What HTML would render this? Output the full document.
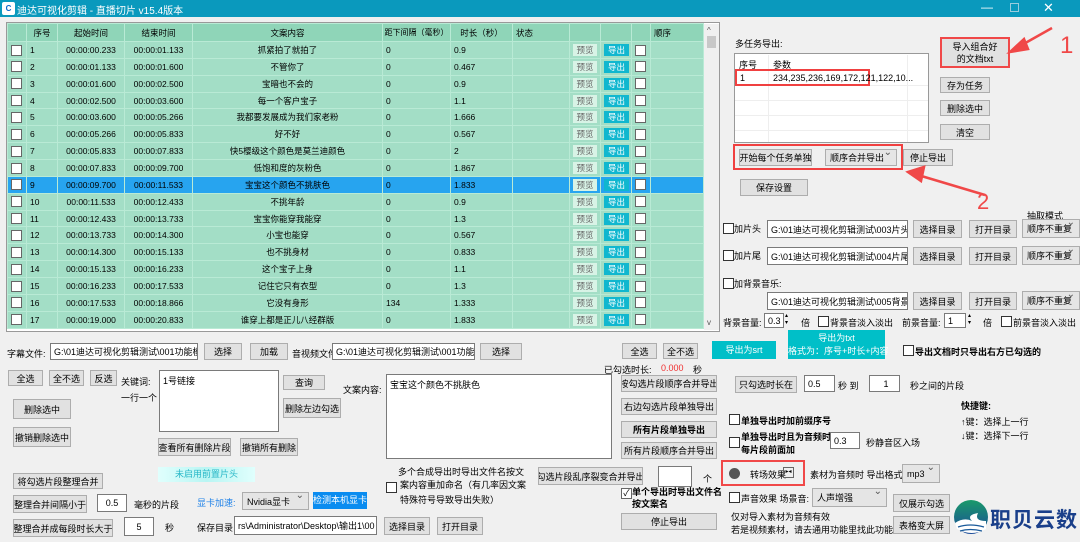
<!DOCTYPE html>
<html><head><meta charset="utf-8"><style>
*{box-sizing:border-box;margin:0;padding:0}
body{width:1080px;height:542px;position:relative;overflow:hidden;background:#f0f0f0;font-family:"Liberation Sans","Noto Sans CJK SC",sans-serif;font-size:9px;color:#000}
.a{position:absolute;white-space:nowrap}
.b{position:absolute;background:#e1e1e1;border:1px solid #adadad;text-align:center;font-size:9px;display:flex;align-items:center;justify-content:center;white-space:nowrap;overflow:hidden}
.i{position:absolute;background:#fff;border:1px solid #7a7a7a;font-size:9px;padding-left:3px;display:flex;align-items:center;white-space:nowrap;overflow:hidden}
.cb{position:absolute;width:11px;height:11px;background:#fff;border:1px solid #333}
.cmb{position:absolute;background:#e5e5e5;border:1px solid #adadad;font-size:9px;padding-left:4px;display:flex;align-items:center;white-space:nowrap}
.cmb:after{content:"⌄";position:absolute;right:4px;top:-3px;font-size:10px;color:#555}
table{position:absolute;left:7px;top:23px;width:696px;border-collapse:collapse;table-layout:fixed;background:#a3dec6}
td{height:16.87px;border:1px solid #b9ead5;font-size:8.5px;padding:0 3px;white-space:nowrap;overflow:hidden}
tr.h td{background:#8fd5b8;height:18px;text-align:center}
tr.s td{background:#27a4ef;color:#000}
td.c{text-align:center}
.pv{display:inline-block;background:#d8f3e6;color:#666;padding:0 3px;font-size:8.5px;line-height:12px}
.dc{display:inline-block;background:#10b7cf;color:#fff;padding:0 4px;font-size:8.5px;line-height:12px}
.tb{display:inline-block;width:11px;height:11px;background:#fff;border:1px solid #666;vertical-align:middle}
</style></head><body>
<div class="a" style="left:0;top:0;width:1080px;height:17px;background:#0a99bd"></div>
<div class="a" style="left:2px;top:2px;width:13px;height:13px;background:#fff;border-radius:2px;font-size:8px;color:#0a66cc;font-weight:bold;text-align:center;line-height:13px">C</div>
<div class="a" style="left:17px;top:2px;color:#fff;font-size:10px">迪达可视化剪辑 -  直播切片   v15.4版本</div>
<div class="a" style="left:981px;top:0;color:#fff;font-size:12px">—</div>
<div class="a" style="left:1010px;top:3px;width:9px;height:9px;border:1px solid #9cd"></div>
<div class="a" style="left:1043px;top:0px;color:#fff;font-size:13px">✕</div>
<div class="a" style="left:6px;top:22px;width:714px;height:310px;background:#fff;border:1px solid #999"></div>
<div class="a" style="left:704px;top:24px;width:15px;height:306px;background:#f0f0f0"></div>
<div class="a" style="left:707px;top:36px;width:9px;height:12px;background:#c8c8c8"></div>
<div class="a" style="left:707px;top:26px;font-size:8px;color:#555">^</div>
<div class="a" style="left:707px;top:318px;font-size:8px;color:#555">v</div>
<table>
<colgroup><col style="width:19px"><col style="width:31px"><col style="width:67px"><col style="width:68px"><col style="width:190px"><col style="width:68px"><col style="width:62px"><col style="width:57px"><col style="width:31px"><col style="width:31px"><col style="width:19px"><col style="width:53px"></colgroup>
<tr class="h"><td></td><td>序号</td><td>起始时间</td><td>结束时间</td><td>文案内容</td><td style="padding:0;font-size:8px">距下间隔（毫秒）</td><td>时长（秒）</td><td style="text-align:left">状态</td><td></td><td></td><td></td><td style="text-align:left">顺序</td></tr>
<tr><td><span class="tb"></span></td><td>1</td><td class="c">00:00:00.233</td><td class="c">00:00:01.133</td><td class="c">抓紧拍了就拍了</td><td>0</td><td>0.9</td><td></td><td class="c"><span class="pv">预览</span></td><td class="c"><span class="dc">导出</span></td><td><span class="tb"></span></td><td></td></tr>
<tr><td><span class="tb"></span></td><td>2</td><td class="c">00:00:01.133</td><td class="c">00:00:01.600</td><td class="c">不管你了</td><td>0</td><td>0.467</td><td></td><td class="c"><span class="pv">预览</span></td><td class="c"><span class="dc">导出</span></td><td><span class="tb"></span></td><td></td></tr>
<tr><td><span class="tb"></span></td><td>3</td><td class="c">00:00:01.600</td><td class="c">00:00:02.500</td><td class="c">宝暗也不会的</td><td>0</td><td>0.9</td><td></td><td class="c"><span class="pv">预览</span></td><td class="c"><span class="dc">导出</span></td><td><span class="tb"></span></td><td></td></tr>
<tr><td><span class="tb"></span></td><td>4</td><td class="c">00:00:02.500</td><td class="c">00:00:03.600</td><td class="c">每一个客户宝子</td><td>0</td><td>1.1</td><td></td><td class="c"><span class="pv">预览</span></td><td class="c"><span class="dc">导出</span></td><td><span class="tb"></span></td><td></td></tr>
<tr><td><span class="tb"></span></td><td>5</td><td class="c">00:00:03.600</td><td class="c">00:00:05.266</td><td class="c">我都要发展成为我们家老粉</td><td>0</td><td>1.666</td><td></td><td class="c"><span class="pv">预览</span></td><td class="c"><span class="dc">导出</span></td><td><span class="tb"></span></td><td></td></tr>
<tr><td><span class="tb"></span></td><td>6</td><td class="c">00:00:05.266</td><td class="c">00:00:05.833</td><td class="c">好不好</td><td>0</td><td>0.567</td><td></td><td class="c"><span class="pv">预览</span></td><td class="c"><span class="dc">导出</span></td><td><span class="tb"></span></td><td></td></tr>
<tr><td><span class="tb"></span></td><td>7</td><td class="c">00:00:05.833</td><td class="c">00:00:07.833</td><td class="c">快5樱级这个颜色是莫兰迪颜色</td><td>0</td><td>2</td><td></td><td class="c"><span class="pv">预览</span></td><td class="c"><span class="dc">导出</span></td><td><span class="tb"></span></td><td></td></tr>
<tr><td><span class="tb"></span></td><td>8</td><td class="c">00:00:07.833</td><td class="c">00:00:09.700</td><td class="c">低饱和度的灰粉色</td><td>0</td><td>1.867</td><td></td><td class="c"><span class="pv">预览</span></td><td class="c"><span class="dc">导出</span></td><td><span class="tb"></span></td><td></td></tr>
<tr class="s"><td><span class="tb"></span></td><td>9</td><td class="c">00:00:09.700</td><td class="c">00:00:11.533</td><td class="c">宝宝这个颜色不挑肤色</td><td>0</td><td>1.833</td><td></td><td class="c"><span class="pv">预览</span></td><td class="c"><span class="dc">导出</span></td><td><span class="tb"></span></td><td></td></tr>
<tr><td><span class="tb"></span></td><td>10</td><td class="c">00:00:11.533</td><td class="c">00:00:12.433</td><td class="c">不挑年龄</td><td>0</td><td>0.9</td><td></td><td class="c"><span class="pv">预览</span></td><td class="c"><span class="dc">导出</span></td><td><span class="tb"></span></td><td></td></tr>
<tr><td><span class="tb"></span></td><td>11</td><td class="c">00:00:12.433</td><td class="c">00:00:13.733</td><td class="c">宝宝你能穿我能穿</td><td>0</td><td>1.3</td><td></td><td class="c"><span class="pv">预览</span></td><td class="c"><span class="dc">导出</span></td><td><span class="tb"></span></td><td></td></tr>
<tr><td><span class="tb"></span></td><td>12</td><td class="c">00:00:13.733</td><td class="c">00:00:14.300</td><td class="c">小宝也能穿</td><td>0</td><td>0.567</td><td></td><td class="c"><span class="pv">预览</span></td><td class="c"><span class="dc">导出</span></td><td><span class="tb"></span></td><td></td></tr>
<tr><td><span class="tb"></span></td><td>13</td><td class="c">00:00:14.300</td><td class="c">00:00:15.133</td><td class="c">也不挑身材</td><td>0</td><td>0.833</td><td></td><td class="c"><span class="pv">预览</span></td><td class="c"><span class="dc">导出</span></td><td><span class="tb"></span></td><td></td></tr>
<tr><td><span class="tb"></span></td><td>14</td><td class="c">00:00:15.133</td><td class="c">00:00:16.233</td><td class="c">这个宝子上身</td><td>0</td><td>1.1</td><td></td><td class="c"><span class="pv">预览</span></td><td class="c"><span class="dc">导出</span></td><td><span class="tb"></span></td><td></td></tr>
<tr><td><span class="tb"></span></td><td>15</td><td class="c">00:00:16.233</td><td class="c">00:00:17.533</td><td class="c">记住它只有衣型</td><td>0</td><td>1.3</td><td></td><td class="c"><span class="pv">预览</span></td><td class="c"><span class="dc">导出</span></td><td><span class="tb"></span></td><td></td></tr>
<tr><td><span class="tb"></span></td><td>16</td><td class="c">00:00:17.533</td><td class="c">00:00:18.866</td><td class="c">它没有身形</td><td>134</td><td>1.333</td><td></td><td class="c"><span class="pv">预览</span></td><td class="c"><span class="dc">导出</span></td><td><span class="tb"></span></td><td></td></tr>
<tr><td><span class="tb"></span></td><td>17</td><td class="c">00:00:19.000</td><td class="c">00:00:20.833</td><td class="c">谁穿上都是正儿八经群版</td><td>0</td><td>1.833</td><td></td><td class="c"><span class="pv">预览</span></td><td class="c"><span class="dc">导出</span></td><td><span class="tb"></span></td><td></td></tr>
</table>

<!-- right top -->
<div class="a" style="left:735px;top:37px">多任务导出:</div>
<div class="a" style="left:734px;top:53px;width:195px;height:90px;background:#fff;border:1px solid #999"></div>
<div class="a" style="left:739px;top:58px">序号</div><div class="a" style="left:773px;top:58px">参数</div>
<div class="a" style="left:768px;top:55px;width:1px;height:87px;background:#eee"></div>
<div class="a" style="left:907px;top:55px;width:1px;height:87px;background:#eee"></div>
<div class="a" style="left:735px;top:85px;width:193px;height:1px;background:#eee"></div>
<div class="a" style="left:735px;top:100px;width:193px;height:1px;background:#eee"></div>
<div class="a" style="left:735px;top:115px;width:193px;height:1px;background:#eee"></div>
<div class="a" style="left:735px;top:130px;width:193px;height:1px;background:#eee"></div>
<div class="a" style="left:735px;top:69px;width:135px;height:17px;border:2px solid #f04040"></div>
<div class="a" style="left:740px;top:73px">1</div><div class="a" style="left:773px;top:73px">234,235,236,169,172,121,122,10...</div>
<div class="b" style="left:940px;top:37px;width:70px;height:31px;border:2px solid #f04848;flex-direction:column;line-height:12px">导入组合好<br>的文档txt</div>
<div class="b" style="left:940px;top:77px;width:50px;height:16px">存为任务</div>
<div class="b" style="left:940px;top:100px;width:50px;height:16px">删除选中</div>
<div class="b" style="left:940px;top:124px;width:50px;height:16px">清空</div>
<div class="a" style="left:733px;top:144px;width:170px;height:26px;border:2px solid #f04040"></div>
<div class="b" style="left:739px;top:149px;width:73px;height:17px">开始每个任务单独</div>
<div class="cmb" style="left:825px;top:149px;width:72px;height:17px">顺序合并导出</div>
<div class="b" style="left:903px;top:149px;width:50px;height:17px">停止导出</div>
<div class="b" style="left:740px;top:179px;width:68px;height:17px">保存设置</div>
<svg class="a" style="left:900px;top:25px" width="180" height="190"><g stroke="#f04848" stroke-width="2.5" fill="#f04848"><line x1="152" y1="3" x2="120" y2="21"/><polygon points="110,27 124,14 128,24"/><line x1="85" y1="170" x2="18" y2="150"/><polygon points="8,147 24,142 21,156"/></g><text x="160" y="28" font-size="24" fill="#f04848" font-family="Liberation Sans">1</text><text x="77" y="184" font-size="22" fill="#f04848" font-family="Liberation Sans">2</text></svg>

<div class="a" style="left:1027px;top:209px">抽取模式</div>
<div class="cb" style="left:723px;top:223px"></div><div class="a" style="left:734px;top:222px">加片头</div>
<div class="i" style="left:767px;top:220px;width:141px;height:18px">G:\01迪达可视化剪辑测试\003片头</div>
<div class="b" style="left:913px;top:220px;width:49px;height:18px">选择目录</div>
<div class="b" style="left:969px;top:220px;width:48px;height:18px">打开目录</div>
<div class="cmb" style="left:1022px;top:219px;width:58px;height:19px">顺序不重复</div>
<div class="cb" style="left:723px;top:250px"></div><div class="a" style="left:734px;top:249px">加片尾</div>
<div class="i" style="left:767px;top:247px;width:141px;height:18px">G:\01迪达可视化剪辑测试\004片尾</div>
<div class="b" style="left:913px;top:247px;width:49px;height:18px">选择目录</div>
<div class="b" style="left:969px;top:247px;width:48px;height:18px">打开目录</div>
<div class="cmb" style="left:1022px;top:246px;width:58px;height:19px">顺序不重复</div>
<div class="cb" style="left:723px;top:278px"></div><div class="a" style="left:734px;top:277px">加背景音乐:</div>
<div class="i" style="left:767px;top:292px;width:141px;height:18px">G:\01迪达可视化剪辑测试\005背景音</div>
<div class="b" style="left:913px;top:292px;width:49px;height:18px">选择目录</div>
<div class="b" style="left:969px;top:292px;width:48px;height:18px">打开目录</div>
<div class="cmb" style="left:1022px;top:291px;width:58px;height:19px">顺序不重复</div>
<div class="a" style="left:723px;top:316px">背景音量:</div>
<div class="i" style="left:764px;top:313px;width:20px;height:15px">0.3</div><div class="a" style="left:785px;top:313px;font-size:6px;line-height:7px">▴<br>▾</div>
<div class="a" style="left:801px;top:316px">倍</div>
<div class="cb" style="left:818px;top:316px"></div><div class="a" style="left:830px;top:316px">背景音淡入淡出</div>
<div class="a" style="left:902px;top:316px">前景音量:</div>
<div class="i" style="left:944px;top:313px;width:22px;height:15px">1</div><div class="a" style="left:968px;top:313px;font-size:6px;line-height:7px">▴<br>▾</div>
<div class="a" style="left:983px;top:316px">倍</div>
<div class="cb" style="left:1001px;top:316px"></div><div class="a" style="left:1013px;top:316px">前景音淡入淡出</div>

<!-- middle -->
<div class="a" style="left:7px;top:347px">字幕文件:</div>
<div class="i" style="left:50px;top:343px;width:148px;height:17px">G:\01迪达可视化剪辑测试\001功能模</div>
<div class="b" style="left:204px;top:343px;width:38px;height:17px">选择</div>
<div class="b" style="left:250px;top:343px;width:38px;height:17px">加载</div>
<div class="a" style="left:292px;top:347px">音视频文件:</div>
<div class="i" style="left:332px;top:343px;width:143px;height:17px">G:\01迪达可视化剪辑测试\001功能模</div>
<div class="b" style="left:480px;top:343px;width:42px;height:17px">选择</div>
<div class="b" style="left:622px;top:343px;width:35px;height:16px">全选</div>
<div class="b" style="left:663px;top:343px;width:35px;height:16px">全不选</div>
<div class="a" style="left:712px;top:341px;width:64px;height:18px;background:#00bfc8;color:#fff;text-align:center;line-height:18px">导出为srt</div>
<div class="a" style="left:788px;top:330px;width:97px;height:29px;background:#00bfc8;color:#fff;text-align:center;line-height:13px;padding-top:2px">导出为txt<br>格式为：序号+时长+内容</div>
<div class="cb" style="left:903px;top:345px"></div><div class="a" style="left:915px;top:345px;font-weight:bold">导出文档时只导出右方已勾选的</div>
<div class="a" style="left:604px;top:363px">已勾选时长:</div>
<div class="a" style="left:661px;top:363px;color:#f03030">0.000</div><div class="a" style="left:693px;top:363px">秒</div>

<div class="b" style="left:8px;top:370px;width:35px;height:16px">全选</div>
<div class="b" style="left:49px;top:370px;width:35px;height:16px">全不选</div>
<div class="b" style="left:90px;top:370px;width:27px;height:16px">反选</div>
<div class="a" style="left:121px;top:375px">关键词:</div>
<div class="a" style="left:121px;top:391px">一行一个</div>
<div class="i" style="left:159px;top:370px;width:120px;height:62px;align-items:flex-start;padding-top:3px">1号链接</div>
<div class="b" style="left:283px;top:375px;width:42px;height:15px">查询</div>
<div class="b" style="left:283px;top:398px;width:58px;height:20px">删除左边勾选</div>
<div class="b" style="left:13px;top:399px;width:58px;height:20px">删除选中</div>
<div class="b" style="left:13px;top:427px;width:58px;height:20px">撤销删除选中</div>
<div class="a" style="left:343px;top:383px">文案内容:</div>
<div class="i" style="left:386px;top:374px;width:226px;height:85px;align-items:flex-start;padding-top:3px">宝宝这个颜色不挑肤色</div>
<div class="b" style="left:621px;top:375px;width:96px;height:17px">按勾选片段顺序合并导出</div>
<div class="b" style="left:621px;top:398px;width:96px;height:17px">右边勾选片段单独导出</div>
<div class="b" style="left:621px;top:421px;width:96px;height:17px;font-weight:bold">所有片段单独导出</div>
<div class="b" style="left:621px;top:442px;width:96px;height:17px">所有片段顺序合并导出</div>
<div class="b" style="left:735px;top:376px;width:62px;height:17px">只勾选时长在</div>
<div class="i" style="left:804px;top:375px;width:31px;height:17px">0.5</div>
<div class="a" style="left:838px;top:379px">秒 到</div>
<div class="i" style="left:869px;top:375px;width:31px;height:17px;justify-content:center">1</div>
<div class="a" style="left:910px;top:379px">秒之间的片段</div>
<div class="a" style="left:961px;top:399px;font-weight:bold">快捷键:</div>
<div class="a" style="left:961px;top:415px">↑键：选择上一行</div>
<div class="a" style="left:961px;top:429px">↓键：选择下一行</div>
<div class="cb" style="left:729px;top:414px"></div><div class="a" style="left:741px;top:414px;font-weight:bold">单独导出时加前缀序号</div>
<div class="cb" style="left:729px;top:437px"></div><div class="a" style="left:741px;top:431px;font-weight:bold;line-height:13px">单独导出时且为音频时<br>每片段前面加</div>
<div class="i" style="left:830px;top:432px;width:30px;height:17px">0.3</div>
<div class="a" style="left:866px;top:436px">秒静音区入场</div>
<div class="a" style="left:721px;top:460px;width:84px;height:26px;border:2px solid #f04848"></div>
<div class="a" style="left:729px;top:468px;width:11px;height:11px;border-radius:50%;background:#555"></div>
<div class="a" style="left:750px;top:468px">转场效果</div>
<div class="a" style="left:783px;top:467px;width:11px;height:11px;border:1px solid #666;font-size:6px;text-align:center;line-height:9px">▸◂</div>
<div class="a" style="left:810px;top:468px">素材为音频时 导出格式:</div>
<div class="cmb" style="left:902px;top:464px;width:38px;height:19px">mp3</div>
<div class="cb" style="left:729px;top:492px"></div><div class="a" style="left:741px;top:492px">声音效果 场景音:</div>
<div class="cmb" style="left:812px;top:488px;width:75px;height:19px">人声增强</div>
<div class="b" style="left:893px;top:494px;width:57px;height:18px">仅展示勾选</div>
<div class="b" style="left:893px;top:516px;width:57px;height:18px">表格变大屏</div>
<div class="a" style="left:731px;top:510px">仅对导入素材为音频有效</div>
<div class="a" style="left:731px;top:523px">若是视频素材，请去通用功能里找此功能</div>

<div class="b" style="left:158px;top:438px;width:73px;height:18px">查看所有删除片段</div>
<div class="b" style="left:240px;top:438px;width:58px;height:18px">撤销所有删除</div>
<div class="a" style="left:158px;top:467px;width:97px;height:15px;background:linear-gradient(90deg,#e0fffd,#b9f5f3,#e0fffd);color:#2ab8c8;text-align:center;line-height:15px">未启用前置片头</div>
<div class="b" style="left:13px;top:473px;width:90px;height:16px">将勾选片段整理合并</div>
<div class="b" style="left:13px;top:495px;width:74px;height:18px">整理合并间隔小于</div>
<div class="i" style="left:97px;top:494px;width:30px;height:18px;justify-content:center;padding:0">0.5</div>
<div class="a" style="left:134px;top:498px">毫秒的片段</div>
<div class="a" style="left:197px;top:496px;color:#1a7fe8">显卡加速:</div>
<div class="cmb" style="left:242px;top:492px;width:67px;height:18px">Nvidia显卡</div>
<div class="a" style="left:313px;top:492px;width:54px;height:17px;background:#0a8cf0;color:#fff;text-align:center;line-height:17px">检测本机显卡</div>
<div class="b" style="left:13px;top:519px;width:100px;height:18px">整理合并成每段时长大于</div>
<div class="i" style="left:124px;top:517px;width:30px;height:19px;justify-content:center;padding:0">5</div>
<div class="a" style="left:165px;top:521px">秒</div>
<div class="a" style="left:197px;top:521px">保存目录</div>
<div class="i" style="left:234px;top:516px;width:143px;height:19px">rs\Administrator\Desktop\输出1\00</div>
<div class="b" style="left:384px;top:517px;width:46px;height:18px">选择目录</div>
<div class="b" style="left:437px;top:517px;width:46px;height:18px">打开目录</div>
<div class="a" style="left:398px;top:465px;line-height:15px">多个合成导出时导出文件名按文</div>
<div class="cb" style="left:386px;top:482px"></div>
<div class="a" style="left:400px;top:478px;line-height:15px">案内容重加命名（有几率因文案<br>特殊符号导致导出失败）</div>
<div class="b" style="left:538px;top:467px;width:105px;height:18px">勾选片段乱序裂变合并导出</div>
<div class="i" style="left:658px;top:466px;width:34px;height:21px"></div>
<div class="a" style="left:703px;top:472px">个</div>
<div class="cb" style="left:621px;top:488px;border-color:#666;font-size:9px;line-height:9px;text-align:center">✓</div>
<div class="a" style="left:632px;top:486px;font-weight:bold;line-height:12px">单个导出时导出文件名<br>按文案名</div>
<div class="b" style="left:621px;top:513px;width:96px;height:17px">停止导出</div>

<!-- logo -->
<svg class="a" style="left:952px;top:499px" width="38" height="38"><defs><linearGradient id="g" x1="0" y1="0" x2="0" y2="1"><stop offset="0" stop-color="#1a9a6a"/><stop offset="1" stop-color="#1a4a9a"/></linearGradient></defs><circle cx="19" cy="18" r="17" fill="url(#g)"/><path d="M3 24 Q12 18 20 22 Q14 16 26 14 Q22 22 34 22 L34 30 Q20 38 5 30Z" fill="#fff"/><path d="M6 28 Q18 24 32 28 M8 32 Q18 29 30 32" stroke="#1a5a9a" stroke-width="1.2" fill="none"/></svg>
<div class="a" style="left:990px;top:504px;font-size:21px;font-weight:bold;color:#1a3f8a;letter-spacing:1px">职贝云数</div>
</body></html>
